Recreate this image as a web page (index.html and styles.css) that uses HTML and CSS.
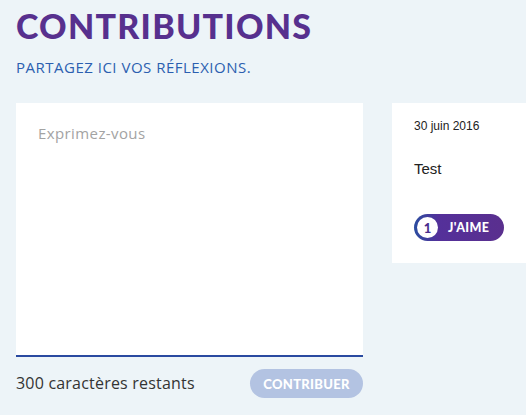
FILE: index.html
```html
<!DOCTYPE html>
<html lang="fr">
<head>
    <meta charset="UTF-8">
    <title>Contributions</title>
    <link rel="stylesheet" href="styles.css">
</head>
<body>
    <div class="page">
        <h1 class="title">CONTRIBUTIONS</h1>
        <p class="subtitle">PARTAGEZ ICI VOS RÉFLEXIONS.</p>

        <div class="columns">
            <!-- Formulaire -->
            <div class="form">
                <textarea class="editor" placeholder="Exprimez-vous"></textarea>
                <div class="form-footer">
                    <span class="counter">300 caractères restants</span>
                    <button class="submit" disabled>CONTRIBUER</button>
                </div>
            </div>

            <!-- Contribution -->
            <div class="card">
                <div class="card-date">30 juin 2016</div>
                <div class="card-text">Test</div>
                <button class="like">
                    <span class="like-count">1</span>
                    <span class="like-label">J'AIME</span>
                </button>
            </div>
        </div>
    </div>
</body>
</html>
```

FILE: styles.css
```css
/* General */
body {
    margin: 0;
    background: #edf4f8;
    font-family: 'Open Sans', sans-serif;
    color: #333;
    overflow: hidden;
}

.page {
    padding: 5px 0 0 16px;
}

/* Header */
.title {
    margin: 0;
    font-family: 'Lato', sans-serif;
    font-size: 34px;
    font-weight: 900;
    color: #57308e;
    letter-spacing: 1.25px;
    line-height: 42px;
}

.subtitle {
    margin: 10px 0 0;
    font-size: 15px;
    color: #2b5fb0;
    letter-spacing: 0.5px;
    line-height: 20px;
}

/* Columns */
.columns {
    display: flex;
    align-items: flex-start;
    gap: 29px;
    margin-top: 26px;
}

/* Form */
.form {
    width: 347px;
    flex-shrink: 0;
}

.editor {
    display: block;
    box-sizing: border-box;
    width: 100%;
    height: 254px;
    border: none;
    border-bottom: 2px solid #2a4aa0;
    background: #fff;
    padding: 20px 22px;
    font-family: 'Open Sans', sans-serif;
    font-size: 15px;
    letter-spacing: 0.4px;
    resize: none;
    outline: none;
}

.editor::placeholder {
    color: #a3a3a3;
}

.form-footer {
    display: flex;
    justify-content: space-between;
    align-items: center;
    margin-top: 12px;
}

.counter {
    font-size: 16px;
    letter-spacing: 0.2px;
    color: #333;
    margin-top: -2px;
}

.submit {
    width: 113px;
    height: 29px;
    border: none;
    border-radius: 15px;
    background: #b3c3e2;
    color: #fff;
    font-family: 'Lato', sans-serif;
    font-weight: 900;
    font-size: 13px;
    letter-spacing: 0.3px;
    padding: 0;
}

/* Card */
.card {
    flex: 1;
    background: #fff;
    padding: 16px 22px 20px;
    height: 160px;
    box-sizing: border-box;
}

.card-date {
    font-family: 'Liberation Sans', sans-serif;
    font-size: 12px;
    color: #222;
}

.card-text {
    margin-top: 27px;
    font-family: 'Liberation Sans', sans-serif;
    font-size: 15px;
    color: #222;
}

.like {
    display: flex;
    align-items: center;
    gap: 10px;
    margin-top: 37px;
    width: 90px;
    height: 27px;
    padding: 0 0 0 3px;
    border: none;
    border-radius: 14px;
    background: linear-gradient(90deg, #2b4da0 0%, #54309a 28%, #5a2f8e 100%);
    color: #fff;
    font-family: 'Lato', sans-serif;
}

.like-count {
    display: flex;
    align-items: center;
    justify-content: center;
    width: 21px;
    height: 21px;
    border-radius: 50%;
    background: #fff;
    color: #4a2f8e;
    font-weight: 900;
    font-size: 13px;
}

.like-label {
    font-weight: 900;
    font-size: 12.5px;
    letter-spacing: 0.4px;
}
```
